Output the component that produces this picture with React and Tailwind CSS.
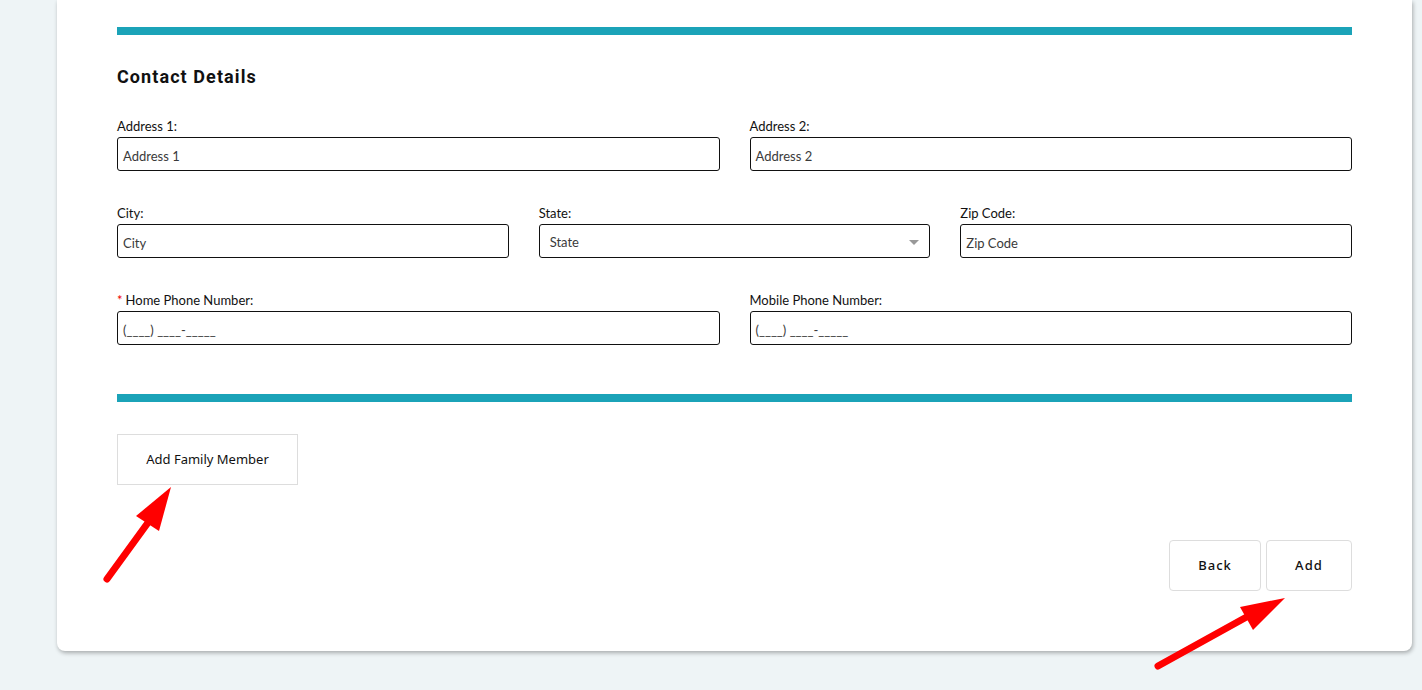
import React from "react";

const Label = ({ children, required }) => (
  <label className="block text-[13px] leading-[14px] text-[#111] mb-[4px] font-['Lato',sans-serif]">
    {required && <span className="text-[#e00] mr-[3px]">*</span>}
    {children}
  </label>
);

const Input = ({ placeholder }) => (
  <div className="h-[34px] border border-[#111] rounded-[3px] flex items-center pt-[6px] px-[5px] text-[13px] text-[#3a3a3a] font-['Lato',sans-serif] whitespace-pre">
    {placeholder}
  </div>
);

export default function App() {
  return (
    <div className="relative w-full h-[690px] bg-[#eef4f6] overflow-hidden font-['Lato',sans-serif]">
      <div className="ml-[57px] mr-[10px] bg-white rounded-b-[8px] shadow-[1px_2px_4px_rgba(0,0,0,0.3)] px-[60px] pt-[27px] pb-[60px]">
        <div className="h-[8px] bg-[#1ba3b8]" />
        <h2 className="mt-[32px] text-[18px] leading-[20px] font-bold tracking-[0.06em] text-[#111] font-['Roboto',sans-serif]">
          Contact Details
        </h2>

        <div className="mt-[32px] grid grid-cols-2 gap-x-[30px]">
          <div>
            <Label>Address 1:</Label>
            <Input placeholder="Address 1" />
          </div>
          <div>
            <Label>Address 2:</Label>
            <Input placeholder="Address 2" />
          </div>
        </div>

        <div className="mt-[35px] grid grid-cols-3 gap-x-[30px]">
          <div>
            <Label>City:</Label>
            <Input placeholder="City" />
          </div>
          <div>
            <Label>State:</Label>
            <div className="h-[34px] border border-[#111] rounded-[3px] flex items-center justify-between pt-[3px] pl-[10px] pr-[10px] text-[13px] text-[#3a3a3a]">
              <span>State</span>
              <svg width="10" height="6" viewBox="0 0 10 6">
                <path d="M0 0 L10 0 L5 5 Z" fill="#999" />
              </svg>
            </div>
          </div>
          <div>
            <Label>Zip Code:</Label>
            <Input placeholder="Zip Code" />
          </div>
        </div>

        <div className="mt-[35px] grid grid-cols-2 gap-x-[30px]">
          <div>
            <Label required>Home Phone Number:</Label>
            <Input placeholder="(____) ____-_____" />
          </div>
          <div>
            <Label>Mobile Phone Number:</Label>
            <Input placeholder="(____) ____-_____" />
          </div>
        </div>

        <div className="mt-[49px] h-[8px] bg-[#1ba3b8]" />

        <div className="mt-[32px]">
          <button className="w-[181px] h-[51px] border border-[#ddd] bg-white text-[13px] font-normal text-[#111] font-['Noto_Sans',sans-serif]">
            Add Family Member
          </button>
        </div>

        <div className="mt-[55px] flex justify-end gap-[5px]">
          <button className="w-[92px] h-[51px] border border-[#ddd] rounded-[4px] bg-white text-[13px] font-medium tracking-[0.08em] text-[#111] font-['Noto_Sans',sans-serif]">
            Back
          </button>
          <button className="w-[86px] h-[51px] border border-[#ddd] rounded-[4px] bg-white text-[13px] font-medium tracking-[0.08em] text-[#111] font-['Noto_Sans',sans-serif]">
            Add
          </button>
        </div>
      </div>

      <svg className="absolute inset-0 pointer-events-none" width="1422" height="690" viewBox="0 0 1422 690">
        <line x1="107" y1="579" x2="155" y2="513" stroke="#f00" strokeWidth="7" strokeLinecap="round" />
        <polygon points="171,487 136,516 159,531" fill="#f00" />
        <line x1="1158" y1="666" x2="1252" y2="614" stroke="#f00" strokeWidth="7" strokeLinecap="round" />
        <polygon points="1285,598 1240,607 1253,630" fill="#f00" />
      </svg>
    </div>
  );
}
